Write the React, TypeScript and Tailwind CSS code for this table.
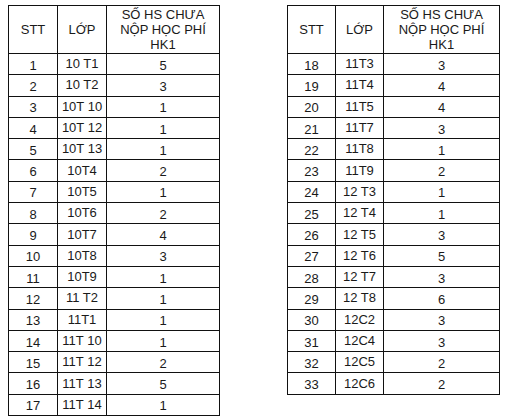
import React from "react";

const left: [string, string, string][] = [
  ["1", "10 T1", "5"],
  ["2", "10 T2", "3"],
  ["3", "10T 10", "1"],
  ["4", "10T 12", "1"],
  ["5", "10T 13", "1"],
  ["6", "10T4", "2"],
  ["7", "10T5", "1"],
  ["8", "10T6", "2"],
  ["9", "10T7", "4"],
  ["10", "10T8", "3"],
  ["11", "10T9", "1"],
  ["12", "11 T2", "1"],
  ["13", "11T1", "1"],
  ["14", "11T 10", "1"],
  ["15", "11T 12", "2"],
  ["16", "11T 13", "5"],
  ["17", "11T 14", "1"],
];

const right: [string, string, string][] = [
  ["18", "11T3", "3"],
  ["19", "11T4", "4"],
  ["20", "11T5", "4"],
  ["21", "11T7", "3"],
  ["22", "11T8", "1"],
  ["23", "11T9", "2"],
  ["24", "12 T3", "1"],
  ["25", "12 T4", "1"],
  ["26", "12 T5", "3"],
  ["27", "12 T6", "5"],
  ["28", "12 T7", "3"],
  ["29", "12 T8", "6"],
  ["30", "12C2", "3"],
  ["31", "12C4", "3"],
  ["32", "12C5", "2"],
  ["33", "12C6", "2"],
];

function Table({
  rows,
  cols,
}: {
  rows: [string, string, string][];
  cols: string;
}) {
  return (
    <div
      className={`grid ${cols} gap-px bg-[#111] border border-[#111] text-[13px] text-[#1a1a1a] leading-[15px]`}
      style={{ gridTemplateRows: `47px repeat(${rows.length}, 20.3px)` }}
    >
      <div className="bg-white flex items-center justify-center">STT</div>
      <div className="bg-white flex items-center justify-center">LỚP</div>
      <div className="bg-white flex items-center justify-center text-center">
        SỐ HS CHƯA
        <br />
        NỘP HỌC PHÍ
        <br />
        HK1
      </div>
      {rows.map((r) => (
        <React.Fragment key={r[0]}>
          <div className="bg-white flex items-center justify-center pt-[2px]">{r[0]}</div>
          <div className="bg-white flex items-center justify-center pb-[1px]">{r[1]}</div>
          <div className="bg-white flex items-center justify-center pt-[2px]">{r[2]}</div>
        </React.Fragment>
      ))}
    </div>
  );
}

export default function App() {
  return (
    <div
      className="w-[505px] h-[420px] bg-white flex items-start pt-[5px] pl-[8px]"
      style={{ fontFamily: '"Liberation Sans", Arial, sans-serif' }}
    >
      <div className="w-[212px]">
        <Table rows={left} cols="grid-cols-[48px_48px_112px]" />
      </div>
      <div className="w-[213px] ml-[67px]">
        <Table rows={right} cols="grid-cols-[47px_47px_115px]" />
      </div>
    </div>
  );
}
